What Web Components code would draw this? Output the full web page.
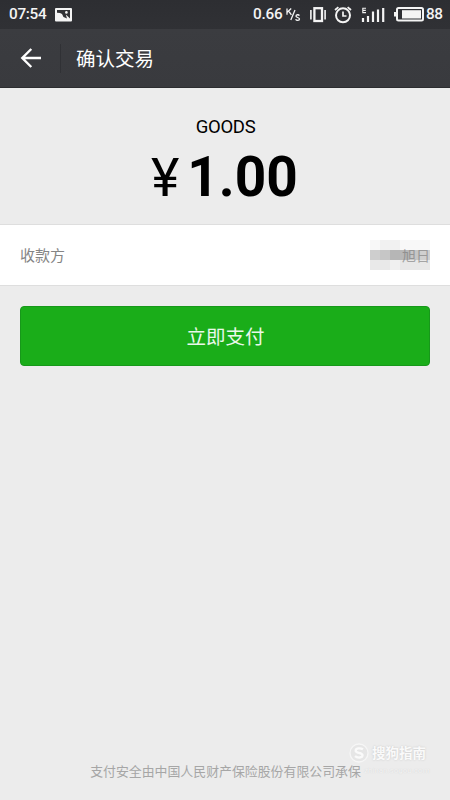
<!DOCTYPE html>
<html lang="zh-CN">
<head>
<meta charset="utf-8">
<title>确认交易</title>
<style>
html,body{margin:0;height:100%}
body{font-family:Roboto,"Noto Sans CJK SC",sans-serif;background:#ececec}
</style>
</head>
<body>
<pay-screen></pay-screen>
<script>
const define=(name,html)=>customElements.define(name,class extends HTMLElement{
  constructor(){super();this.attachShadow({mode:'open'}).innerHTML=html;}
});
define('status-bar',`<style>
:host{display:flex;align-items:center;height:29px;box-sizing:border-box;padding:0 8px 0 9px;background:linear-gradient(#2d2e32,#303135);color:#f4f4f4;font-size:15.3px;font-weight:500;line-height:29px}
svg{display:block;flex:none;fill:none;stroke:#f4f4f4}
.time{width:46px;letter-spacing:-.3px}
.rate{margin-left:auto;width:32px;letter-spacing:-.2px}
.unit{margin-right:9px}
.vib{margin-right:8px}.clock{margin-right:9px}.sig{margin-right:9px}
.pct{width:16px;margin-left:2px;letter-spacing:-.5px}
</style>
<span class="time">07:54</span>
<svg width="17" height="15" viewBox="0 0 17 15"><rect y="1" width="17" height="13.5" rx="1" fill="#f4f4f4" stroke="none"/><path d="M2 3H15V11.5L10.8 7.5L12 11.5L8.5 10L7 7L5 6L2 5.8Z" fill="#303135" stroke="none"/><circle cx="11.4" cy="5.4" r="1.3" fill="#f4f4f4" stroke="none"/></svg>
<span class="rate">0.66</span>
<svg class="unit" width="16" height="18" viewBox="0 0 16 18" stroke-width="1.3"><path d="M2 2.5V8.8M6.2 2.5L2.2 6.2M3.6 5L6.4 8.8M10 4L5.8 14M14.4 9.6C13.6 8.3 10.9 8.5 11 10.1C11.1 11.8 14.5 11.2 14.5 13.1C14.5 14.8 11.3 14.8 10.6 13.2"/></svg>
<svg class="vib" width="16" height="16" viewBox="0 0 16 16"><rect x="4.4" y="1.2" width="7.6" height="12.8" stroke-width="2.3"/><path d="M.9 3V12.5M15.1 3V12.5" stroke-width="1.6"/></svg>
<svg class="clock" width="18" height="18" viewBox="0 0 18 18"><circle cx="9" cy="9.3" r="7" stroke-width="2"/><path d="M9 5.5V10H12.5" stroke-width="1.7"/><path d="M1 4L4.4 1.1M17 4L13.6 1.1" stroke-width="1.8"/></svg>
<svg class="sig" width="24" height="16" viewBox="0 0 24 16"><path d="M5 1.2H1.8V5.6H5M1.8 3.4H4.8" stroke-width="1.1"/><path d="M2 11V15M7 9V15M12 4.5V15M17 2.5V15M22.2 1V15" stroke-width="2.2"/></svg>
<svg width="30" height="15" viewBox="0 0 30 15"><rect x="3" y="1" width="26" height="12.5" rx="1.5" stroke-width="2"/><rect x="8" y="3.2" width="19" height="8.3" fill="#f4f4f4" stroke="none"/><path d="M1 5V9.5" stroke-width="2"/></svg>
<span class="pct">88</span>`);
define('title-bar',`<style>
:host{display:flex;align-items:center;height:59px;box-sizing:border-box;padding-left:20px;background:linear-gradient(#3b3c40,#393a3e);border-bottom:1px solid #2c2d30;color:#fff;font-size:19.5px}
svg{display:block;fill:none;stroke:#fff;stroke-width:2.4}
i{width:1px;height:29px;background:#303135;margin:0 15px 0 19px}
span{padding-bottom:2px}
</style>
<svg width="21" height="20" viewBox="0 0 21 20"><path d="M21 10H2M11.3 1L2.3 10L11.3 19"/></svg><i></i><span><slot></slot></span>`);
define('amount-panel',`<style>
:host{display:flex;flex-direction:column;align-items:center;height:136px;color:#000}
.name{font-size:18.5px;line-height:22px;margin-top:28px;padding-left:1px;letter-spacing:-.3px}
.sum{display:flex;align-items:baseline;justify-content:center;height:64px;line-height:64px;margin-top:7px;font-size:55px;font-weight:700;padding-right:2px}
.cur{display:flex;justify-content:center;width:30px;margin-right:7px;font-weight:400;font-size:54px}
</style>
<span class="name"><slot name="name"></slot></span>
<div class="sum"><span class="cur">¥</span><span><slot name="value"></slot></span></div>`);
define('payee-row',`<style>
:host{display:flex;align-items:center;justify-content:space-between;height:62px;box-sizing:border-box;padding:0 20px;background:#fff;border-top:1px solid #dedede;border-bottom:1px solid #dedede;color:#858585;font-size:15px}
.label{padding-bottom:1px}
.mask{display:flex;align-items:center;justify-content:flex-end;box-sizing:border-box;width:60px;height:30px;padding-bottom:1px;color:#777;font-size:14px;background:
linear-gradient(90deg,#b8b8b8 10px,#c6c6c6 10px 20px,#d0d0d0 20px) 30px 10px/30px 10px no-repeat,
linear-gradient(#b6b6b6,#b6b6b6) 20px 10px/10px 10px no-repeat,
linear-gradient(90deg,#cecece 10px,#c6c6c6 10px) 0 10px/20px 10px no-repeat,
linear-gradient(90deg,#e9e9e9 20px,#f0f0f0 20px 30px,#e8e8e8 30px) 0 20px/60px 10px no-repeat,
linear-gradient(90deg,#f8f8f8 10px,#f1f1f1 10px 30px,#f8f8f8 30px)}
.mask span{opacity:.6}
</style>
<span class="label"><slot></slot></span><div class="mask"><span><slot name="payee"></slot></span></div>`);
define('pay-button',`<style>
:host{display:flex;margin:20px 20px 0}
button{flex:1;height:60px;padding:0 0 1px 1px;border:1px solid #17981a;border-radius:4px;background:#1aad19;color:#eaf8ea;font:19.5px Roboto,"Noto Sans CJK SC",sans-serif}
</style><button><slot></slot></button>`);
define('source-mark',`<style>
:host{position:absolute;left:349px;top:740px;display:flex;gap:3px;color:#fafafa;white-space:nowrap}
svg{display:block;margin-top:3px}
.t{font-size:13.5px;line-height:26px;font-weight:700;text-shadow:0 0 2px #c4c4c4}
.u{font-size:8px;line-height:10px;margin-left:-8px;color:#f4f4f4;text-shadow:0 0 1px #ccc}
</style>
<svg width="20" height="20" viewBox="0 0 20 20" fill="none"><circle cx="10" cy="10" r="9" stroke="#f6f6f6" stroke-width="1.3" fill="#e6e6e6"/><path d="M14 6.3C11 4.6 6.5 5.2 6.7 7.8C6.9 10.4 13.5 9.2 13.5 12.2C13.5 15 8.5 15.2 6 13.2" stroke="#fafafa" stroke-width="2.3"/></svg>
<div><div class="t">搜狗指南</div><div class="u">zhinan.sogou.com</div></div>`);
define('pay-screen',`<style>
:host{display:flex;flex-direction:column;position:relative;height:800px;width:450px;overflow:hidden;background:#ececec}
footer{margin-top:auto;padding:0 0 19px 1px;text-align:center;font-size:12.9px;line-height:18px;color:#a6a6a6}
</style>
<status-bar></status-bar><title-bar>确认交易</title-bar>
<amount-panel><span slot="name">GOODS</span><span slot="value">1.00</span></amount-panel>
<payee-row>收款方<span slot="payee">旭日</span></payee-row>
<pay-button>立即支付</pay-button>
<footer>支付安全由中国人民财产保险股份有限公司承保</footer>
<source-mark></source-mark>`);
</script>
</body>
</html>
